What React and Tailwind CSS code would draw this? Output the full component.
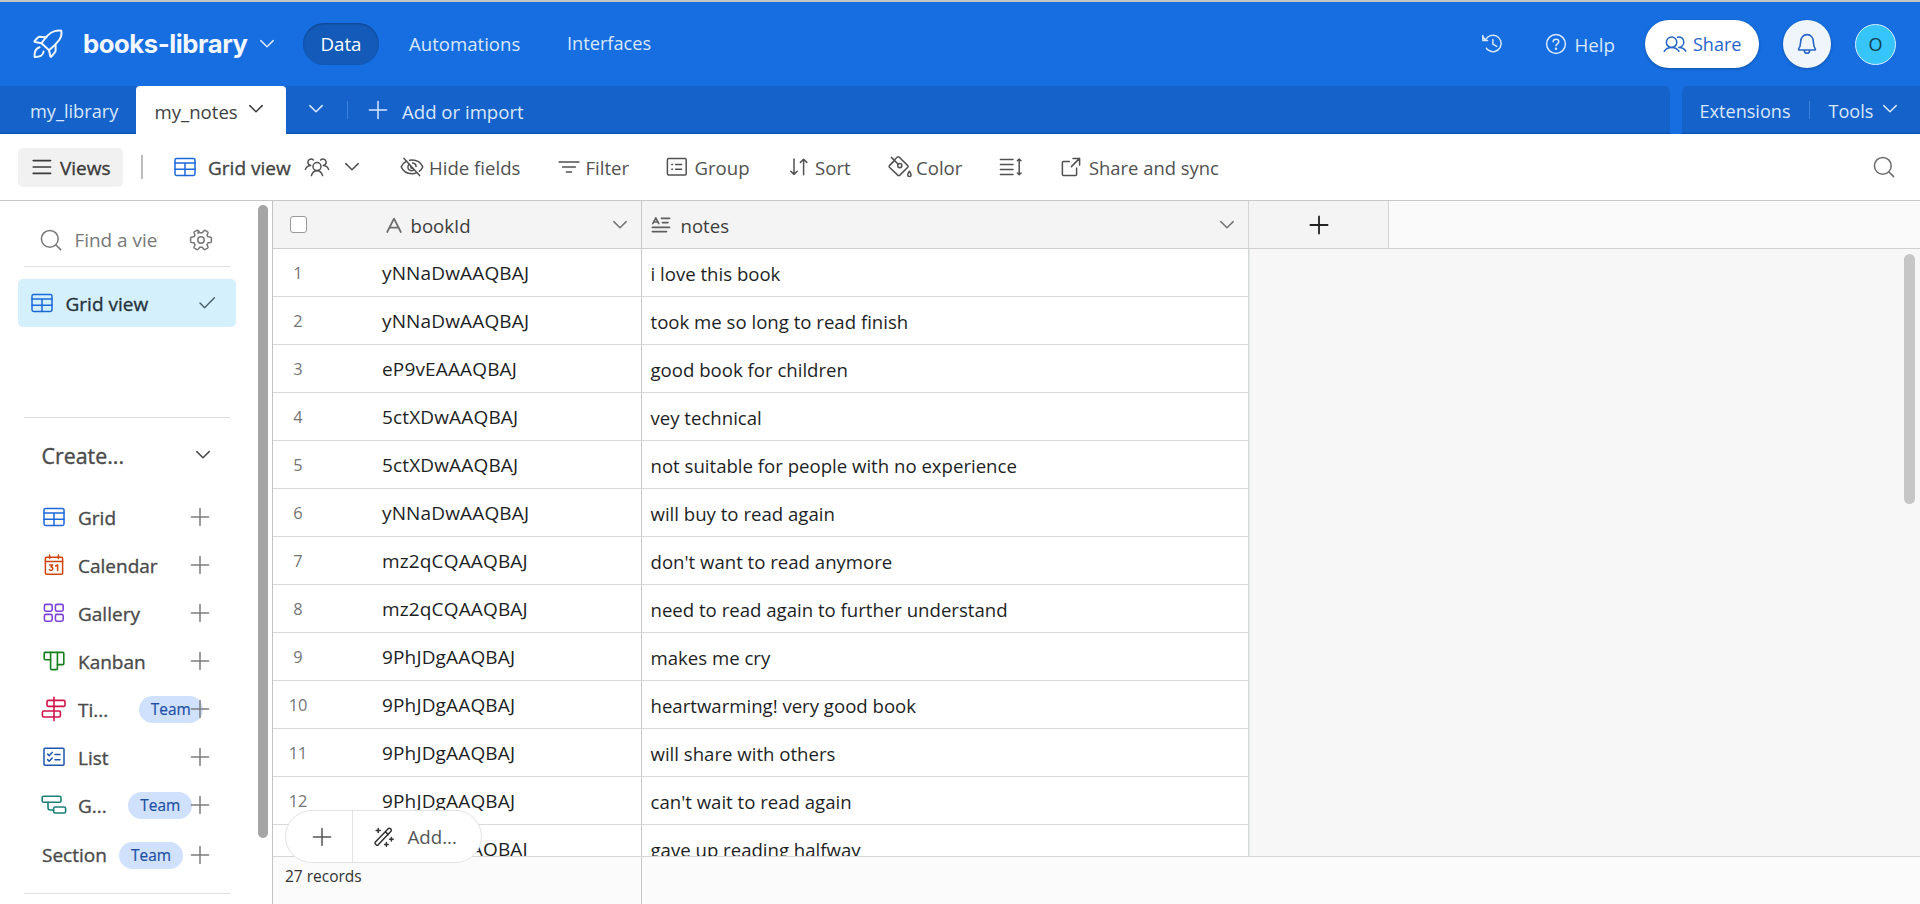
import React from "react";

function Svg({ w, h, s = 1.5, className = "", children }) {
  return (
    <svg
      width={w}
      height={h}
      viewBox={`0 0 ${w} ${h}`}
      fill="none"
      stroke="currentColor"
      strokeWidth={s}
      strokeLinecap="round"
      strokeLinejoin="round"
      className={`block shrink-0 ${className}`}
    >
      {children}
    </svg>
  );
}

const Chevron = ({ className = "" }) => (
  <Svg w={16} h={12} className={className}>
    <path d="M1.8 2.6 L8 8.8 L14.2 2.6" />
  </Svg>
);

const Plus = ({ className = "", s = 1.5 }) => (
  <Svg w={20} h={20} s={s} className={className}>
    <path d="M10 1.4V18.6M1.4 10H18.6" />
  </Svg>
);

const Rocket = () => (
  <Svg w={32} h={32} s={2}>
    <path d="M9.5 15.3 C13 10 17.5 4.8 22 3.4 C25 2.4 28 2.3 29.3 2.8 C29.8 5.5 29.4 9 27.2 12 C24.5 15.6 21 19 17 22.3 Z" />
    <path d="M14.4 9.2 L7.8 8.7 Q6.6 8.7 5.9 9.5 L2.6 13 Q2.3 13.8 3.2 14 L9.5 15.3" />
    <path d="M23.6 16.6 V22.4 Q23.6 23.6 22.8 24.4 L19.4 28.6 Q18.6 29.3 18.3 28.3 L17 22.3" />
    <path d="M7.6 19.2 C3.2 20.2 2.4 24.2 2.6 29 C7.4 29.2 10.8 27.6 11.6 23.6" />
  </Svg>
);

const GridIcon = ({ className = "" }) => (
  <Svg w={22} h={20} className={className}>
    <rect x="1" y="1.4" width="20" height="17" rx="1.6" />
    <path d="M1 6H21M1 12.2H21M11 6V18.4" />
  </Svg>
);

const Collaborators = () => (
  <Svg w={26} h={20} s={1.5}>
    <circle cx="13" cy="9.6" r="4" />
    <path d="M7.4 18.6C8.4 15.4 10.4 13.8 13 13.8S17.6 15.4 18.6 18.6" />
    <path d="M6.6 8.4C4.6 7.8 3.6 6.2 4 4.4C4.5 2.2 7.4 1.2 9.4 3" />
    <path d="M1.4 12.4C2.2 9.8 4 8.6 6.6 8.4" />
    <path d="M19.4 8.4C21.4 7.8 22.4 6.2 22 4.4C21.5 2.2 18.6 1.2 16.6 3" />
    <path d="M24.6 12.4C23.8 9.8 22 8.6 19.4 8.4" />
  </Svg>
);

const EyeOff = () => (
  <Svg w={24} h={20} s={1.5}>
    <path d="M4 1.4L19.6 18.6" />
    <path d="M6.6 4.2C3.6 5.8 1.8 8.2 1.2 9.8C2.8 13.8 6.8 16.8 12 16.8C13.8 16.8 15.4 16.4 16.8 15.7" />
    <path d="M9.6 3.2C17 1.8 21.4 6.2 22.8 9.8C22.2 11.4 21 13 19.4 14.2" />
    <path d="M9.2 7.2C7.2 9.2 7.6 12 9.6 13.2C11 14 12.8 13.8 14 12.6" />
    <path d="M12.6 6C14.6 6.2 16 7.8 16.1 9.6" />
    <path d="M10.8 9.2C10.6 10.8 11.4 11.4 12.6 11.2" />
  </Svg>
);

const FilterIcon = () => (
  <Svg w={22} h={14}>
    <path d="M1 2H21M4.6 7H17.4M8.4 12H13.6" />
  </Svg>
);

const GroupIcon = () => (
  <Svg w={22} h={20}>
    <rect x="1.4" y="1.6" width="18.8" height="16.4" rx="1.2" />
    <path d="M9.6 7.4H15.6M9.6 12.2H15.6" />
    <path d="M5.8 7.4H6.6M5.8 12.2H6.6" />
  </Svg>
);

const SortIcon = () => (
  <Svg w={20} h={20}>
    <path d="M5 2V17.4M1.8 14.2L5 17.4L8.2 14.2" />
    <path d="M14.6 17.8V2.2M11.4 5.4L14.6 2.2L17.8 5.4" />
  </Svg>
);

const PaintIcon = () => (
  <Svg w={26} h={24}>
    <path d="M4.4 2.4L11.2 9.2" />
    <circle cx="12.8" cy="10.6" r="2.1" />
    <path d="M7 5.2L10.4 2Q11.2 1.4 12 2L20.8 10.6Q21.4 11.4 20.8 12.2L12.6 20.4Q11.8 21 11 20.4L2.4 12.2Q1.8 11.4 2.4 10.6L7.4 5.6" />
    <path d="M22.4 16.2C24.8 19.4 24.6 21.6 22.4 21.6S20 19.4 22.4 16.2Z" />
  </Svg>
);

const RowHeightIcon = () => (
  <Svg w={24} h={20}>
    <path d="M1.4 2.4H14M1.4 7.4H14M1.4 12.4H14M1.4 17.4H14" />
    <path d="M20.2 2.4V17.4M18.4 3.8L20.2 2L22 3.8M18.4 16L20.2 17.8L22 16" />
  </Svg>
);

const ShareOut = () => (
  <Svg w={20} h={20}>
    <path d="M8.4 4.4H2.4Q1.4 4.4 1.4 5.4V17.4Q1.4 18.4 2.4 18.4H14.6Q15.6 18.4 15.6 17.4V11" />
    <path d="M12 1.4H18.6V8M18.6 1.4L10.4 9.6" />
  </Svg>
);

const SearchIcon = () => (
  <Svg w={22} h={22}>
    <circle cx="9.8" cy="9.8" r="8.4" />
    <path d="M16 16L20.6 20.6" />
  </Svg>
);

const GearIcon = () => (
  <Svg w={24} h={24}>
    <circle cx="12" cy="12" r="3.2" />
    <path d="M9 5.4L9.4 2.8Q9.6 2.2 7.8 2.4L5.4 3.8Q4.8 4.2 5 4.8L6 7.2L5.2 8.6L2.4 9.2Q1.6 9.4 1.6 10.2V13.4Q1.6 14.2 2.4 14.4L5 14.8L6 16.6L5 19Q4.8 19.8 5.4 20.2L8 21.6Q8.8 21.8 9.2 21.2L10.8 19.2H13.2L14.8 21.2Q15.2 21.8 16 21.6L18.6 20.2Q19.2 19.8 19 19L18 16.6L19 14.8L21.6 14.4Q22.4 14.2 22.4 13.4V10.2Q22.4 9.4 21.6 9.2L18.8 8.6L18 7.2L19 4.8Q19.2 4.2 18.6 3.8L16.2 2.4Q15.4 2.2 15 2.8L13.2 4.8H10.8L9.4 2.8" />
  </Svg>
);

const HistoryIcon = () => (
  <Svg w={22} h={22}>
    <path d="M4.8 6.4C7 2.8 11.4 1.2 15.2 2.9C19.6 4.9 21.4 10 19.2 14.4C16.8 18.8 11.2 20 7.4 17.2C6.6 16.6 6 16 5.4 15.2" />
    <path d="M1.8 2.6V7.4H6.6M1.8 3.8L4.4 6.8" />
    <path d="M11.9 6.4V11.2L15.8 13.4" />
  </Svg>
);

const HelpIcon = () => (
  <Svg w={22} h={22}>
    <circle cx="11" cy="11" r="9.4" />
    <path d="M8.2 8.8C8.2 5.4 13.8 5.4 13.8 8.8C13.8 11 11 10.8 11 12.8" />
    <circle cx="11" cy="15.8" r="0.5" fill="currentColor" />
  </Svg>
);

const PeopleIcon = () => (
  <Svg w={24} h={18}>
    <circle cx="8.6" cy="7.2" r="5.2" />
    <path d="M1.2 16.4C2.8 13.6 5.4 12.4 8.6 12.4S14.4 13.6 16 16.4" />
    <path d="M14.6 2.2C17.8 1.2 20.8 3.6 20.8 7C20.8 10 18.6 12.2 15.8 12.4C19.2 12.4 21.4 13.8 22.8 16.2" />
  </Svg>
);

const BellIcon = () => (
  <Svg w={20} h={22} s={1.6}>
    <path d="M3.6 9C3.6 4.6 6.2 1.6 10 1.6S16.4 4.6 16.4 9C16.4 12.6 17.4 14.6 18.4 16.2Q18.6 17 17.8 17H2.2Q1.4 17 1.6 16.2C2.6 14.6 3.6 12.6 3.6 9Z" />
    <path d="M7.4 17.6C7.6 21.2 12.4 21.2 12.6 17.6" />
  </Svg>
);

const CalendarIcon = () => (
  <Svg w={20} h={22}>
    <rect x="1.4" y="3.2" width="17.2" height="17" rx="1" />
    <path d="M1.4 7.6H18.6M5.6 1V4.6M14.4 1V4.6" />
    <path d="M5.6 11H8.6L7 13C9.4 13 9.2 16.4 7 16.4C6.2 16.4 5.8 16.2 5.4 15.8M11.6 12L13.6 10.8V16.6" />
  </Svg>
);

const GalleryIcon = () => (
  <Svg w={22} h={20} s={1.6}>
    <rect x="1.4" y="1.4" width="7.8" height="6.8" rx="1.6" />
    <rect x="12.4" y="1.4" width="7.8" height="6.8" rx="1.6" />
    <rect x="1.4" y="11.4" width="7.8" height="6.8" rx="1.6" />
    <rect x="12.4" y="11.4" width="7.8" height="6.8" rx="1.6" />
  </Svg>
);

const KanbanIcon = () => (
  <Svg w={22} h={20} s={1.6}>
    <path d="M2.2 1.4H19.8Q20.8 1.4 20.8 2.4V12.4Q20.8 13.6 19.6 13.6H14.4" />
    <path d="M2.2 1.4Q1.2 1.4 1.2 2.4V7.6Q1.2 8.8 2.4 8.8H7.6" />
    <path d="M7.6 1.4V17.4Q7.6 18.6 8.8 18.6H13.2Q14.4 18.6 14.4 17.4V1.4" />
  </Svg>
);

const TimelineIcon = () => (
  <Svg w={26} h={26} s={1.6}>
    <rect x="6" y="4.4" width="18" height="6" rx="1.4" />
    <rect x="1.4" y="15" width="18" height="6" rx="1.4" />
    <path d="M13 1.4V24.4" />
  </Svg>
);

const ListIcon = () => (
  <Svg w={22} h={20}>
    <rect x="1" y="1.2" width="20" height="17" rx="1" />
    <path d="M4.6 7L6.2 8.6L9.2 5.4M4.6 12.6L6.2 14.2L9.2 11" />
    <path d="M12 7.4H17M12 12.8H17" />
  </Svg>
);

const GanttIcon = () => (
  <Svg w={26} h={20} s={1.6}>
    <rect x="1.2" y="1.2" width="18.8" height="6" rx="1.4" />
    <rect x="12.6" y="12" width="12" height="6" rx="1.6" />
    <path d="M7 7.2V12.6Q7 15 9.4 15H12.6" />
  </Svg>
);

const WandIcon = () => (
  <Svg w={22} h={22}>
    <path d="M2.4 16L15.4 2.6Q16.4 1.8 17.4 2.6L18 3.2Q18.8 4.2 18 5.2L5.2 18.8Q4.2 19.6 3.2 18.8L2.4 18Q1.6 17 2.4 16ZM12.4 5.8L15.2 8.6" />
    <path d="M5.2 2.6V6.6M3.2 4.6H7.2M18.4 11.4V15M16.6 13.2H20.2M13.4 16.6V20.2M11.6 18.4H15.2" />
  </Svg>
);

const rows = [
  ["yNNaDwAAQBAJ", "i love this book"],
  ["yNNaDwAAQBAJ", "took me so long to read finish"],
  ["eP9vEAAAQBAJ", "good book for children"],
  ["5ctXDwAAQBAJ", "vey technical"],
  ["5ctXDwAAQBAJ", "not suitable for people with no experience"],
  ["yNNaDwAAQBAJ", "will buy to read again"],
  ["mz2qCQAAQBAJ", "don't want to read anymore"],
  ["mz2qCQAAQBAJ", "need to read again to further understand"],
  ["9PhJDgAAQBAJ", "makes me cry"],
  ["9PhJDgAAQBAJ", "heartwarming! very good book"],
  ["9PhJDgAAQBAJ", "will share with others"],
  ["9PhJDgAAQBAJ", "can't wait to read again"],
  ["mz2qCQAAQBAJ", "gave up reading halfway"],
];

const TeamPill = ({ className = "" }) => (
  <span
    className={`flex h-[27px] w-16 shrink-0 items-center justify-center rounded-full bg-[#d0e1fe] pt-px text-[15.4px] font-medium text-[#1d4fa3] [-webkit-text-stroke:0.2px] ${className}`}
  >
    Team
  </span>
);

function CreateRow({ icon, color, label, pill }) {
  return (
    <div className="flex h-12 w-[210px] items-center pl-[42px]">
      <span className={`flex w-6 shrink-0 justify-center ${color}`}>{icon}</span>
      <span className="ml-[12px] pt-[2px] text-[19px] leading-[46px] font-medium text-[#4a4a4a] [-webkit-text-stroke:0.35px]">{label}</span>
      {pill && <TeamPill className={pill} />}
      <Plus className="ml-auto text-[#7c7c7c]" />
    </div>
  );
}

function Header() {
  return (
    <header className="flex h-[86px] items-center border-t-2 border-[#c6c6c6] bg-[#166ee1] pl-8 text-[18.7px] text-[#d9e7fb]">
      <span className="text-[#eef5ff]">
        <Rocket />
      </span>
      <h1 className="ml-[19px] w-[173px] pt-px font-['Inter'] text-[25.7px] font-bold whitespace-nowrap tracking-[-0.45px] text-[#f1f6ff]">books-library</h1>
      <Chevron className="ml-[3px]" />
      <nav className="ml-[28px] flex items-center">
        <span className="flex h-[42px] w-[76px] items-center justify-center rounded-full bg-[#135ab9] text-white shadow-[inset_0_1px_2px_rgba(0,0,0,0.25)]">Data</span>
        <span className="ml-[30px] w-[158px] text-[18.6px]">Automations</span>
        <span className="text-[18.2px]">Interfaces</span>
      </nav>
      <div className="ml-auto flex items-center pr-6">
        <HistoryIcon />
        <span className="ml-[42px] flex items-center">
          <HelpIcon />
          <span className="ml-[7.5px] w-[40.5px] pt-[2px]">Help</span>
        </span>
        <button className="ml-[30px] flex h-12 w-[114px] items-center rounded-full bg-white pl-[18px] text-[#2565c8] shadow-[0_1px_3px_rgba(0,0,0,0.25)]">
          <PeopleIcon />
          <span className="ml-[6px] text-[18px]">Share</span>
        </button>
        <button className="ml-[24px] flex size-12 items-center justify-center rounded-full bg-[#f0f5fb] text-[#2565c8] shadow-[0_1px_3px_rgba(0,0,0,0.25)]">
          <BellIcon />
        </button>
        <span className="ml-[24px] flex size-[41px] items-center justify-center rounded-full border-[1.5px] border-[#d8eefb] bg-[#37c5fd] pt-px text-[18px] text-[#12404f]">O</span>
      </div>
    </header>
  );
}

function TabBar() {
  return (
    <div className="flex h-12 bg-[#166ee1] text-[18.6px] text-[#d9e7fb]">
      <div className="flex w-[1670px] items-center rounded-tr-md bg-[#1562ca] shadow-[inset_0_-2px_2px_-1px_rgba(0,0,0,0.2)]">
        <span className="w-[136px] pt-[3px] pl-[30px] text-[18.2px]">my_library</span>
        <div className="flex h-12 w-[150px] items-center rounded-t-[4px] bg-white pl-[18.5px] text-[#3f4042]">
          <span className="w-[93.5px] pt-[3px]">my_notes</span>
          <Chevron className="-mt-[2px]" />
        </div>
        <Chevron className="-mt-[2px] ml-[22px]" />
        <span className="ml-[23px] h-[18px] w-px bg-[#3f80da]" />
        <Plus className="ml-5" />
        <span className="ml-[14px] pt-[3px]">Add or import</span>
      </div>
      <div className="ml-3 flex flex-1 items-center rounded-tl-md bg-[#1562ca] pl-[17.5px] text-[18.1px] shadow-[inset_0_-2px_2px_-1px_rgba(0,0,0,0.2)]">
        <span className="w-[109.5px] pt-[3px]">Extensions</span>
        <span className="h-[18px] w-px bg-[#3f80da]" />
        <span className="ml-[18.5px] w-[53.5px] pt-[3px]">Tools</span>
        <Chevron className="-mt-[2px]" />
      </div>
    </div>
  );
}

function Toolbar() {
  return (
    <div className="flex h-[67px] items-center border-b border-[#c8c8c8] bg-white pl-[18px] text-[18.6px] whitespace-nowrap text-[#515151]">
      <button className="flex h-[39px] w-[105px] items-center rounded-[5px] bg-[#f1f1f1] pl-[14px] font-medium text-[#3a3a3a]">
        <Svg w={20} h={16} s={1.6}>
          <path d="M1.2 1.6H18.6M1.2 8H18.6M1.2 14.4H18.6" />
        </Svg>
        <span className="ml-[8px] pt-[2px] text-[19px] [-webkit-text-stroke:0.35px]">Views</span>
      </button>
      <span className="ml-[18px] h-6 w-[2px] bg-[#bcbcbc]" />
      <GridIcon className="ml-[30.5px] text-[#1b68da]" />
      <span className="ml-[12.5px] w-[95.5px] pt-[2px] text-[19px] font-medium text-[#444] [-webkit-text-stroke:0.35px]">Grid view</span>
      <Collaborators />
      <Chevron className="ml-[14.5px]" />
      <span className="ml-[40px] flex w-[158px] items-center">
        <EyeOff />
        <span className="ml-[5px] pt-[2px]">Hide fields</span>
      </span>
      <span className="flex w-[108px] items-center">
        <FilterIcon />
        <span className="ml-[5.5px] pt-[2px]">Filter</span>
      </span>
      <span className="flex w-[122.5px] items-center">
        <GroupIcon />
        <span className="ml-[6.5px] pt-[2px]">Group</span>
      </span>
      <span className="flex w-[98px] items-center">
        <SortIcon />
        <span className="ml-[6.5px] pt-[2px]">Sort</span>
      </span>
      <span className="flex w-[112.5px] items-center">
        <PaintIcon />
        <span className="ml-[3.5px] pt-[2px]">Color</span>
      </span>
      <span className="w-[62px]">
        <RowHeightIcon />
      </span>
      <ShareOut />
      <span className="ml-[8px] pt-[2px] text-[18.4px]">Share and sync</span>
      <span className="ml-auto pr-[25px] text-[#6b6b6b]">
        <SearchIcon />
      </span>
    </div>
  );
}

function Sidebar() {
  return (
    <aside className="flex w-[273px] shrink-0 border-r border-[#c4c4c4] bg-white pt-1">
      <div className="w-[258px] overflow-hidden">
        <div className="ml-6 flex h-[62px] w-[206px] items-center border-b border-[#dedede] pt-[9px] pl-4 text-[#777]">
          <SearchIcon />
          <span className="ml-[12.5px] w-[83px] shrink-0 overflow-hidden text-[18.9px] whitespace-nowrap">Find a view</span>
          <span className="ml-[31px]">
            <GearIcon />
          </span>
        </div>
        <div className="mt-3 ml-[18px] flex h-12 w-[218px] items-center rounded-[5px] bg-[#d5f0fd] pl-[13px] text-[#1b68da]">
          <GridIcon />
          <span className="ml-[12.5px] w-[132px] pt-[2px] text-[19px] font-medium text-[#25333c] [-webkit-text-stroke:0.35px]">Grid view</span>
          <Svg w={18} h={14} className="text-[#4f646f]">
            <path d="M2 7L6.6 11.8L16.4 1.8" />
          </Svg>
        </div>
        <div className="mt-[90px] ml-6 w-[206px] border-t border-[#dedede]" />
        <div className="mt-[13px] flex h-[50px] w-[211px] items-center pl-[41.5px] text-[#4a4a4a]">
          <span className="pt-px text-[21.4px] font-medium [-webkit-text-stroke:0.35px]">Create...</span>
          <Chevron className="-mt-[3px] ml-auto" />
        </div>
        <div className="mt-[12px]">
          <CreateRow icon={<GridIcon />} color="text-[#1b68da]" label="Grid" />
          <CreateRow icon={<CalendarIcon />} color="text-[#cf4408]" label="Calendar" />
          <CreateRow icon={<GalleryIcon />} color="text-[#7c43d9]" label="Gallery" />
          <CreateRow icon={<KanbanIcon />} color="text-[#14801c]" label="Kanban" />
          <CreateRow icon={<TimelineIcon />} color="text-[#d0134a]" label="Ti..." pill="ml-[30.5px] -mr-[14px]" />
          <CreateRow icon={<ListIcon />} color="text-[#1d55ab]" label="List" />
          <CreateRow icon={<GanttIcon />} color="text-[#1a8079]" label="G..." pill="ml-[21.5px] -mr-[3px]" />
        </div>
        <div className="mt-[2px] flex h-12 w-[210px] items-center pl-[42px]">
          <span className="w-[77px] text-[19px] leading-[46px] font-medium text-[#4a4a4a] [-webkit-text-stroke:0.35px]">Section</span>
          <TeamPill />
          <Plus className="ml-auto text-[#7c7c7c]" />
        </div>
        <div className="mt-[14px] ml-6 w-[206px] border-t border-[#dedede]" />
      </div>
      <div className="h-[633px] w-[10px] rounded-full bg-[#a5a5a5]" />
    </aside>
  );
}

function Grid() {
  return (
    <main className="relative flex flex-1 flex-col bg-[#f7f7f7]">
      <div className="flex h-12 border-b border-[#cfcfcf] bg-[#fafafa] text-[18.6px] text-[#3d3d3d]">
        <div className="flex w-[369px] items-center border-r border-[#c9c9c9] bg-[#f4f4f4] pl-[17px]">
          <span className="size-[17px] rounded-[3px] border-[1.3px] border-[#999] bg-white" />
          <Svg w={18} h={18} s={1.8} className="ml-[77.5px] text-[#6f6f6f]">
            <path d="M2.2 16L9 2.6L15.8 16M4.6 11.6H13.4" />
          </Svg>
          <span className="ml-[8px] pt-[2px]">bookId</span>
          <Chevron className="mr-[13px] ml-auto text-[#757575]" />
        </div>
        <div className="flex w-[607px] items-center border-r border-[#d4d4d4] bg-[#f4f4f4] pl-[9px]">
          <Svg w={20} h={18} s={1.6} className="text-[#5f5f5f]">
            <path d="M1.8 7.6L4.8 1.8L7.8 7.6M2.8 6H6.8M10.4 2.4H18.6M11.4 6.6H17M1.4 11.4H18.6M1.4 15.6H15.6" />
          </Svg>
          <span className="ml-[9.5px] pt-[2px]">notes</span>
          <Chevron className="mr-[13px] ml-auto text-[#757575]" />
        </div>
        <div className="flex w-[140px] items-center justify-center border-r border-[#d4d4d4] bg-[#f4f4f4] text-[#222]">
          <Plus s={1.8} />
        </div>
      </div>
      <div className="h-[607px] w-[976px] overflow-hidden border-r border-[#d3d8d9] bg-white text-[18.6px] text-[#1d1f25] shadow-[1px_0_1px_rgba(0,0,0,0.06)]">
        {rows.map(([id, note], i) => (
          <div key={i} className="flex h-12 items-stretch whitespace-nowrap">
            <div className="flex w-[369px] items-center border-r border-b border-[#d9d9d9] border-r-[#c9c9c9] pt-[2px]">
              <span className="w-[50px] text-center text-[16.4px] text-[#757575]">{i + 1}</span>
              <span className="ml-[59px] text-[19px] tracking-[0.15px]">{id}</span>
            </div>
            <div className="flex flex-1 items-center border-b border-[#d9d9d9] pt-[2px] pl-[8.5px]">{note}</div>
          </div>
        ))}
      </div>
      <footer className="flex flex-1 border-t border-[#d6d6d6] bg-[#fbfbfb] text-[15.5px] text-[#333]">
        <div className="w-[369px] border-r border-[#c9c9c9] pt-[8px] pl-[12px]">27 records</div>
      </footer>
      <div className="absolute bottom-[41px] left-3 flex h-[53px] w-[197px] items-center rounded-full border border-[#e2e2e2] bg-white text-[#555]">
        <span className="flex h-full w-[67px] items-center border-r border-[#e2e2e2] pl-[26px]">
          <Plus />
        </span>
        <span className="ml-[20px] text-[#333]">
          <WandIcon />
        </span>
        <span className="ml-[12.5px] pt-[2px] text-[18.7px]">Add...</span>
      </div>
    </main>
  );
}

export default function App() {
  return (
    <div className="flex h-[904px] w-[1920px] flex-col overflow-hidden bg-white font-['Open_Sans','Noto_Sans',sans-serif]">
      <Header />
      <TabBar />
      <Toolbar />
      <div className="relative flex min-h-0 flex-1">
        <Sidebar />
        <Grid />
        <div className="absolute top-[53px] left-[1904px] h-[250px] w-[11px] rounded-full bg-[#c6c6c6]" />
      </div>
    </div>
  );
}
